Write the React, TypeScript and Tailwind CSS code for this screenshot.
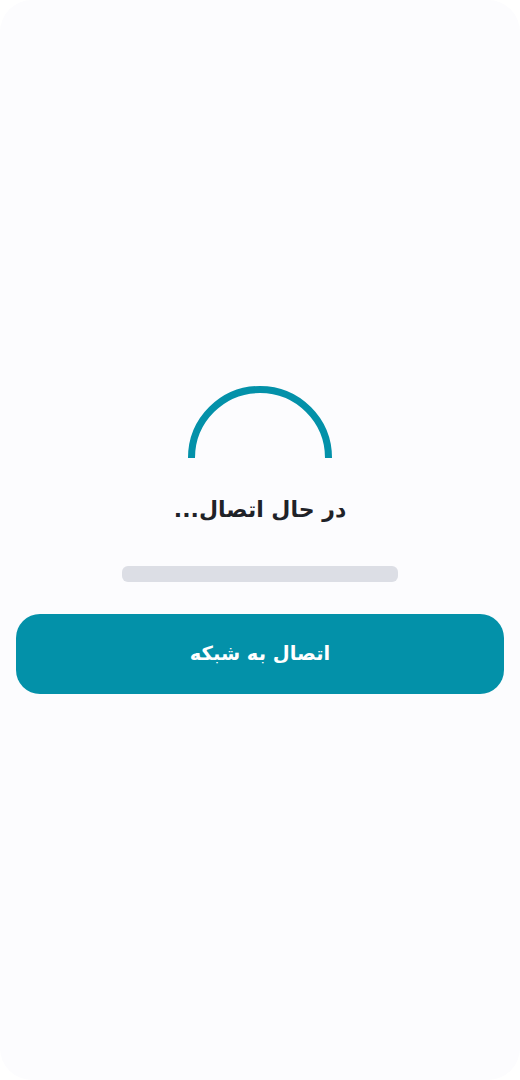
export default function App() {
  return (
    <div className="bg-white">
      <div
        dir="rtl"
        className="flex h-[1080px] flex-col items-center justify-center rounded-[32px] bg-[#fcfcfe] px-4"
        style={{ fontFamily: '"DejaVu Sans", sans-serif' }}
      >
        {/* Spinner arc */}
        <svg width="144" height="72" viewBox="0 0 144 72" className="block">
          <path d="M3.5 72 A68.5 68.5 0 0 1 140.5 72" fill="none" stroke="#0391a9" strokeWidth="7" />
        </svg>

        <h1 className="mt-[36px] text-[22px] font-bold leading-[32px] text-[#1f2228]">در حال اتصال...</h1>

        <div className="mt-[40px] h-4 w-[276px] rounded-md bg-[#dcdee5]" />

        <button className="mt-8 flex h-20 w-full items-center justify-center rounded-3xl bg-[#0391a9] text-[19.5px] font-bold text-white">
          اتصال به شبکه
        </button>
      </div>
    </div>
  )
}
